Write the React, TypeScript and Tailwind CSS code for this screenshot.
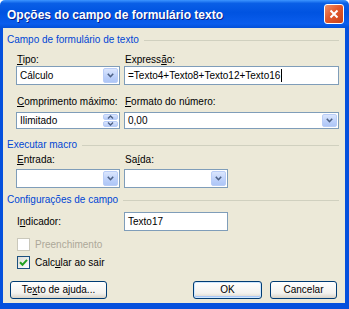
import type { ReactNode } from 'react';

const font = "font-['Liberation_Sans',Arial,sans-serif]";

function Chevron({ up = false }: { up?: boolean }) {
  return (
    <svg width="7" height="5" viewBox="0 0 7 5" aria-hidden="true">
      <path
        d={up ? 'M0.8 4.2 L3.5 1.3 L6.2 4.2' : 'M0.8 0.8 L3.5 3.7 L6.2 0.8'}
        fill="none"
        stroke="#4d6185"
        strokeWidth="1.6"
      />
    </svg>
  );
}

function DropButton() {
  return (
    <span className="flex w-[15px] items-center justify-center self-stretch rounded-[2px] border border-[#b9cdf7] bg-[linear-gradient(to_bottom,#dbe6fd,#bcd0fa_60%,#aec6f6)]">
      <Chevron />
    </span>
  );
}

function Combo({ value, className }: { value?: string; className: string }) {
  return (
    <div className={`flex border border-[#7f9db9] bg-white p-px ${className}`}>
      <span className="flex-1 pl-[2px] leading-[15px]">{value}</span>
      <DropButton />
    </div>
  );
}

function Group({ children }: { children: ReactNode }) {
  return (
    <div className="flex h-[12px] items-center pr-[6px] pl-[4px]">
      <span className="leading-[12px] text-[#0046d5]">{children}</span>
      <span className="ml-[5px] h-px flex-1 bg-[#d0d0bf]" />
    </div>
  );
}

function Label({ children, className = '' }: { children: ReactNode; className?: string }) {
  return <div className={`h-[12px] pl-[1px] leading-[12px] ${className}`}>{children}</div>;
}

function Button({ children, className }: { children: ReactNode; className: string }) {
  return (
    <button
      type="button"
      className={`flex h-[18px] items-center justify-center rounded-[3px] border border-[#003c74] bg-[linear-gradient(to_bottom,#ffffff,#f3f2ee_70%,#d8d3c8)] leading-[12px] text-black ${className}`}
    >
      {children}
    </button>
  );
}

export default function App() {
  return (
    <div className={`${font} flex h-[309px] w-[349px] flex-col text-[10px] text-black`}>
      <div className="flex h-[28px] shrink-0 items-center rounded-t-[5px] bg-[linear-gradient(to_bottom,#3d95ff_0%,#0a5fe6_12%,#0053e1_45%,#0a5ded_85%,#0350d8_100%)] pr-[5px] pl-[7px]">
        <span className="flex-1 pt-px text-[12px] font-bold text-white [text-shadow:1px_1px_0_#0a1f8a]">
          Opções do campo de formulário texto
        </span>
        <span className="flex h-[20px] w-[20px] items-center justify-center rounded-[3px] border border-white bg-[linear-gradient(135deg,#f0906a,#e2582c_45%,#c8421a)]">
          <svg width="10" height="10" viewBox="0 0 10 10" aria-hidden="true">
            <path d="M1.5 1.5 L8.5 8.5 M8.5 1.5 L1.5 8.5" stroke="#fff" strokeWidth="2" />
          </svg>
        </span>
      </div>

      <div className="flex flex-1 flex-col border-r-[4px] border-b-[6px] border-l-[3px] border-[#0550dd] bg-[#ece9d8]">
        <div className="mt-[6px]">
          <Group>Campo de formulário de texto</Group>
        </div>

        <div className="mt-[8px] grid grid-cols-[104px_215px] gap-x-[4px] pl-[13px]">
          <Label>
            <u>T</u>ipo:
          </Label>
          <Label>
            Express<u>ã</u>o:
          </Label>
          <Combo value="Cálculo" className="h-[19px]" />
          <div className="flex h-[19px] border border-[#7f9db9] bg-white pl-[3px] leading-[17px]">
            =Texto4+Texto8+Texto12+Texto16
            <span className="mt-[2px] ml-px h-[13px] w-px bg-black" />
          </div>

          <Label className="mt-[11px]">
            <u>C</u>omprimento máximo:
          </Label>
          <Label className="mt-[11px]">
            <u>F</u>ormato do número:
          </Label>
          <div className="mt-[4px] flex h-[17px] border border-[#7f9db9] bg-white p-px">
            <span className="flex-1 pl-[2px] leading-[13px]">Ilimitado</span>
            <span className="flex w-[15px] flex-col gap-px">
              <span className="flex flex-1 items-center justify-center rounded-[2px] border border-[#b9cdf7] bg-[linear-gradient(to_bottom,#dbe6fd,#b6cbf8)]">
                <svg width="7" height="4" viewBox="0 0 7 4" aria-hidden="true">
                  <path d="M1 3.5 L3.5 1 L6 3.5" fill="none" stroke="#4d6185" strokeWidth="1.4" />
                </svg>
              </span>
              <span className="flex flex-1 items-center justify-center rounded-[2px] border border-[#b9cdf7] bg-[linear-gradient(to_bottom,#dbe6fd,#b6cbf8)]">
                <svg width="7" height="4" viewBox="0 0 7 4" aria-hidden="true">
                  <path d="M1 0.5 L3.5 3 L6 0.5" fill="none" stroke="#4d6185" strokeWidth="1.4" />
                </svg>
              </span>
            </span>
          </div>
          <div className="mt-[4px] flex h-[17px] border border-[#7f9db9] bg-white p-px">
            <span className="flex-1 pl-[2px] leading-[13px]">0,00</span>
            <DropButton />
          </div>
        </div>

        <div className="mt-[10px]">
          <Group>Executar macro</Group>
        </div>

        <div className="mt-[3px] grid grid-cols-[104px_104px] gap-x-[4px] pl-[13px]">
          <Label>
            <u>E</u>ntrada:
          </Label>
          <Label>
            Sa<u>í</u>da:
          </Label>
          <Combo className="mt-[3px] h-[19px]" />
          <Combo className="mt-[3px] h-[19px]" />
        </div>

        <div className="mt-[6px]">
          <Group>Configurações de campo</Group>
        </div>

        <div className="mt-[6px] grid grid-cols-[104px_104px] items-center gap-x-[4px] pl-[13px]">
          <Label>
            I<u>n</u>dicador:
          </Label>
          <div className="flex h-[19px] items-center border border-[#7f9db9] bg-white pl-[3px]">
            Texto17
          </div>
        </div>

        <div className="mt-[7px] flex items-center gap-[5px] pl-[14px]">
          <span className="h-[13px] w-[13px] border border-[#cac8bb] bg-white" />
          <span className="leading-[12px] text-[#aca899]">Preenchimento</span>
        </div>

        <div className="mt-[5px] flex items-center gap-[5px] pl-[14px]">
          <span className="flex h-[13px] w-[13px] items-center justify-center border border-[#1c5180] bg-[linear-gradient(135deg,#dcdcd7,#ffffff)]">
            <svg width="9" height="9" viewBox="0 0 9 9" aria-hidden="true">
              <path d="M1 4.2 L3.5 6.8 L8 1.8" fill="none" stroke="#21a121" strokeWidth="2" />
            </svg>
          </span>
          <span className="leading-[12px]">
            Calc<u>u</u>lar ao sair
          </span>
        </div>

        <div className="mt-[12px] flex pr-[8px] pl-[7px]">
          <Button className="w-[97px]">
            Te<u>x</u>to de ajuda...
          </Button>
          <span className="flex-1" />
          <Button className="w-[69px] shadow-[inset_0_0_0_1px_#cee7ff,inset_0_-1px_0_1px_#a9c7f7]">OK</Button>
          <Button className="ml-[8px] w-[67px]">Cancelar</Button>
        </div>
      </div>
    </div>
  );
}
